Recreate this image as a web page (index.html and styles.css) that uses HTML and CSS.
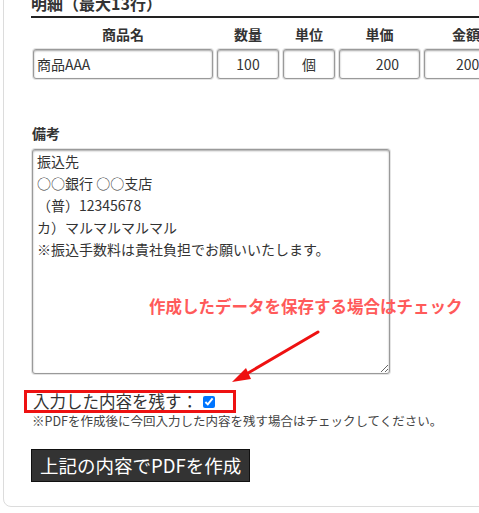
FILE: index.html
```html
<!DOCTYPE html>
<html lang="ja">
<head>
<meta charset="utf-8">
<link rel="stylesheet" href="styles.css">
</head>
<body>
<div class="card">
  <h2 class="section-title">明細（最大13行）</h2>
  <div class="items">
    <div class="col-head">商品名</div>
    <div class="col-head">数量</div>
    <div class="col-head">単位</div>
    <div class="col-head">単価</div>
    <div class="col-head">金額</div>
    <input class="field left" type="text" value="商品AAA">
    <input class="field center" type="text" value="100">
    <input class="field center" type="text" value="個">
    <input class="field right" type="text" value="200">
    <input class="field right" type="text" value="2000">
  </div>

  <div class="notes">
    <div class="label">備考</div>
    <div class="notes-wrap">
      <textarea class="memo">振込先
○○銀行 ○○支店
（普）12345678
カ）マルマルマルマル
※振込手数料は貴社負担でお願いいたします。</textarea>
      <div class="callout">作成したデータを保存する場合はチェック</div>
      <svg class="arrow" width="100" height="60" viewBox="0 0 100 60">
        <line x1="89" y1="2" x2="14" y2="46" stroke="#ee1111" stroke-width="3" stroke-linecap="round"/>
        <polygon points="3,52 17,38 22,49" fill="#ee1111"/>
      </svg>
    </div>
  </div>

  <label class="keep">入力した内容を残す：<input type="checkbox" class="chk" checked></label>
  <p class="hint">※PDFを作成後に今回入力した内容を残す場合はチェックしてください。</p>

  <button class="submit" type="button">上記の内容でPDFを作成</button>
</div>
</body>
</html>
```
FILE: styles.css
```css
html, body {
  margin: 0;
  padding: 0;
  background: #fff;
  overflow: hidden;
}
body {
  font-family: "Noto Sans CJK JP", "Noto Sans", sans-serif;
  color: #333;
}
.card {
  margin: -8px 0 0 3px;
  width: 560px;
  border: 1px solid #dcdcdc;
  border-radius: 8px;
  padding: 0 0 24px 27px;
  box-sizing: border-box;
}
.section-title {
  margin: 0;
  font-size: 16px;
  line-height: 20px;
  font-weight: bold;
  padding-bottom: 3px;
  border-bottom: 2px solid #222;
  color: #333;
}
.items {
  display: grid;
  grid-template-columns: 180px 62px 52px 81px 84px;
  column-gap: 4px;
  row-gap: 5px;
  margin-left: 2px;
}
.col-head {
  text-align: center;
  font-weight: bold;
  font-size: 14px;
  line-height: 20px;
  padding-top: 6px;
  color: #333;
}
.field {
  height: 30px;
  box-sizing: border-box;
  border: 1px solid #9a9a9a;
  border-radius: 3px;
  box-shadow: inset 0 1px 2px rgba(0,0,0,0.35), 0 0 0 1px #e4e4e4;
  font-family: inherit;
  font-size: 14px;
  color: #333;
  padding: 0 3px;
  background: #fff;
  min-width: 0;
  width: 100%;
}
.left { text-align: left; }
.center { text-align: center; }
.right { text-align: right; padding-right: 20px; }
.notes {
  margin-top: 44px;
  margin-left: 1px;
}
.label {
  font-weight: bold;
  font-size: 14px;
  line-height: 20px;
  margin-bottom: 6px;
}
.notes-wrap {
  position: relative;
}
.memo {
  display: block;
  width: 358px;
  height: 225px;
  box-sizing: border-box;
  border: 1px solid #9a9a9a;
  border-radius: 3px;
  box-shadow: inset 0 1px 2px rgba(0,0,0,0.35), 0 0 0 1px #e4e4e4;
  font-family: inherit;
  font-size: 14px;
  line-height: 22px;
  color: #333;
  padding: 0 4px;
  resize: both;
  margin: 0;
}
.callout {
  position: absolute;
  left: 117px;
  top: 147px;
  font-size: 16.5px;
  line-height: 20px;
  font-weight: bold;
  color: #ff5a5a;
  white-space: nowrap;
}
.arrow {
  position: absolute;
  left: 197px;
  top: 181px;
}
.keep {
  display: inline-flex;
  align-items: center;
  margin-top: 16px;
  margin-left: -7px;
  border: 3px solid #ee1111;
  padding: 0 18px 0 6px;
  font-size: 16.5px;
  line-height: 17px;
  color: #333;
}
.chk {
  margin: 0 0 0 5px;
  width: 12px;
  height: 12px;
}
.hint {
  margin: 0 0 0 1px;
  font-size: 12.5px;
  line-height: 16px;
  color: #444;
}
.submit {
  display: block;
  margin-top: 20px;
  background: #333;
  color: #fff;
  border: 1px solid #111;
  font-family: inherit;
  font-size: 18.5px;
  line-height: 25px;
  padding: 3px 8px 3px 8px;
  border-radius: 0;
}
```
